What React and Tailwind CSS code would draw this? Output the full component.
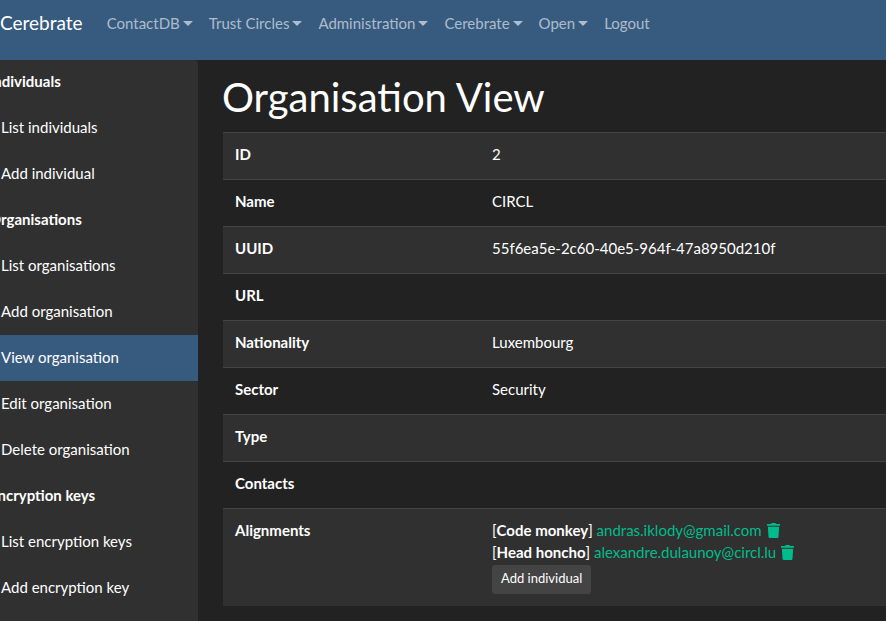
import { FaTrash } from "react-icons/fa";

const menus = ["ContactDB", "Trust Circles", "Administration", "Cerebrate", "Open"];

const sections = [
  { title: "Individuals", items: ["List individuals", "Add individual"] },
  {
    title: "Organisations",
    items: [
      "List organisations",
      "Add organisation",
      "View organisation",
      "Edit organisation",
      "Delete organisation",
    ],
  },
  { title: "Encryption keys", items: ["List encryption keys", "Add encryption key"] },
];

const activeItem = "View organisation";

const alignments = [
  { role: "Code monkey", email: "andras.iklody@gmail.com" },
  { role: "Head honcho", email: "alexandre.dulaunoy@circl.lu" },
];

const fields = [
  ["ID", "2"],
  ["Name", "CIRCL"],
  ["UUID", "55f6ea5e-2c60-40e5-964f-47a8950d210f"],
  ["URL", ""],
  ["Nationality", "Luxembourg"],
  ["Sector", "Security"],
  ["Type", ""],
  ["Contacts", ""],
];

function Navbar() {
  return (
    <nav className="flex h-[60px] items-start bg-[#375a7f] pt-2">
      <a href="#home" className="mr-4 text-[19px] leading-[30px] text-white">
        Cerebrate
      </a>
      <div className="flex leading-[30px] text-white/60">
        {menus.map((name) => (
          <button key={name} type="button" className="flex items-center px-2">
            {name}
            <span className="ml-[3px] border-x-[5px] border-t-[5px] border-x-transparent border-t-current" />
          </button>
        ))}
        <a href="#logout" className="px-2">
          Logout
        </a>
      </div>
    </nav>
  );
}

function Sidebar() {
  return (
    <aside className="-ml-7 w-[226px] shrink-0 overflow-hidden rounded-tr bg-[#303030]">
      <div className="-mt-px">
        {sections.map((section) => (
          <section key={section.title}>
            <h2 className="pt-[11px] pb-[13px] pl-[17px] font-bold">{section.title}</h2>
            <ul>
              {section.items.map((item) => (
                <li key={item}>
                  <a
                    href="#item"
                    className={`block pt-[11px] pb-[13px] pl-[29px] ${item === activeItem ? "bg-[#375a7f]" : ""}`}
                  >
                    {item}
                  </a>
                </li>
              ))}
            </ul>
          </section>
        ))}
      </div>
    </aside>
  );
}

function Row({ label, children }) {
  return (
    <tr className="border-t border-[#444444] odd:bg-[#303030]">
      <th scope="row" className="h-[47px] w-[257px] px-3 pt-[10px] pb-3 text-left align-top font-bold">
        {label}
      </th>
      <td className="px-3 pt-[10px] pb-3 align-top">{children}</td>
    </tr>
  );
}

export default function App() {
  return (
    <div className="flex min-h-screen flex-col overflow-x-hidden bg-[#222222] font-['Lato',sans-serif] text-[15px] leading-[22px] text-white">
      <Navbar />
      <div className="flex grow">
        <Sidebar />
        <main className="min-w-0 grow pt-3 pl-[25px]">
          <h1 className="-ml-px mb-[10px] text-[40px] leading-[50px]">Organisation View</h1>
          <table className="w-full border-collapse">
            <tbody>
              {fields.map(([label, value]) => (
                <Row key={label} label={label}>
                  {value}
                </Row>
              ))}
              <Row label="Alignments">
                {alignments.map(({ role, email }) => (
                  <div key={email}>
                    [<b>{role}</b>]{" "}
                    <a href={`mailto:${email}`} className="text-[#00bc8c]">
                      {email}
                    </a>{" "}
                    <button type="button" aria-label={`Remove ${role}`} className="text-[#00bc8c]">
                      <FaTrash className="inline align-[-2px]" />
                    </button>
                  </div>
                ))}
                <button
                  type="button"
                  className="mt-[2px] block rounded-[3px] bg-[#444444] px-[9px] pt-[3px] pb-[6px] text-[13px] leading-[20px]"
                >
                  Add individual
                </button>
              </Row>
            </tbody>
          </table>
        </main>
      </div>
    </div>
  );
}
